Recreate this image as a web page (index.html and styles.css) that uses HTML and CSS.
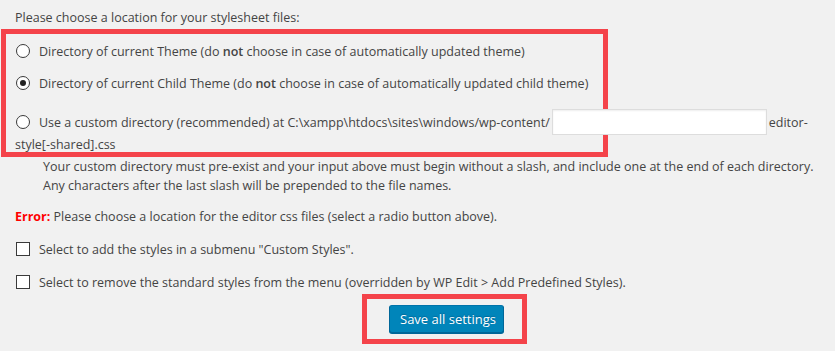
FILE: index.html
```html
<!DOCTYPE html>
<html lang="en">
<head>
<meta charset="utf-8">
<title>Stylesheet location</title>
<link rel="stylesheet" href="styles.css">
</head>
<body>
<div class="page">
  <p class="intro">Please choose a location for your stylesheet files:</p>
  <div class="hl hl-locations">
    <label class="opt"><input type="radio" name="loc">Directory of current Theme (do <b>not</b> choose in case of automatically updated theme)</label>
    <label class="opt opt-second"><input type="radio" name="loc" checked>Directory of current Child Theme (do <b>not</b> choose in case of automatically updated child theme)</label>
    <div class="opt custom"><input type="radio" name="loc">Use a custom directory (recommended) at C:\xampp\htdocs\sites\windows/wp-content/<input type="text" class="field">editor-style[-shared].css</div>
  </div>
  <p class="desc">Your custom directory must pre-exist and your input above must begin without a slash, and include one at the end of each directory.<br>Any characters after the last slash will be prepended to the file names.</p>
  <p class="error"><strong>Error:</strong> Please choose a location for the editor css files (select a radio button above).</p>
  <label class="check check-first"><input type="checkbox">Select to add the styles in a submenu "Custom Styles".</label>
  <label class="check check-second"><input type="checkbox">Select to remove the standard styles from the menu (overridden by WP Edit &gt; Add Predefined Styles).</label>
  <div class="hl hl-submit"><button type="button" class="btn">Save all settings</button></div>
</div>
</body>
</html>
```

FILE: styles.css
```css
html, body {
  margin: 0;
  padding: 0;
  background: #f1f1f1;
}
body {
  font-family: "Open Sans", "Noto Sans", sans-serif;
  font-size: 12.5px;
  color: #444;
  width: 835px;
  height: 351px;
  overflow: hidden;
}
.page {
  display: flex;
  flex-direction: column;
  align-items: flex-start;
}
p { margin: 0; }
.intro {
  margin: 8px 0 0 15px;
  line-height: 20px;
}
.hl {
  border: 5px solid #f4434a;
  box-sizing: border-box;
}
.hl-locations {
  margin: 1px 0 0 1px;
  width: 607px;
  padding: 8px 0 0 9px;
  display: flex;
  flex-direction: column;
  align-items: flex-start;
}
.opt {
  display: block;
  line-height: 20px;
  white-space: nowrap;
}
.opt b { font-weight: 600; }
.opt-second { margin-top: 12px; }
.custom {
  white-space: normal;
  width: 805px;
  margin-top: 18px;
  line-height: 22px;
  margin-bottom: -4px;
}
input[type="radio"],
input[type="checkbox"] {
  -webkit-appearance: none;
  appearance: none;
  box-sizing: border-box;
  width: 14px;
  height: 14px;
  margin: 0 9px 0 1px;
  border: 1px solid #3a3a3a;
  background: #fff;
  vertical-align: -2px;
  position: relative;
}
input[type="radio"] { border-radius: 50%; }
input[type="radio"]:checked::after {
  content: "";
  position: absolute;
  left: 3px;
  top: 3px;
  width: 6px;
  height: 6px;
  border-radius: 50%;
  background: #222;
}
.field {
  box-sizing: border-box;
  width: 215px;
  height: 26px;
  margin: -5px 2px -1px 2px;
  padding: 0 6px;
  border: 1px solid #ddd;
  background: #fff;
  box-shadow: inset 0 1px 2px rgba(0,0,0,.07);
  vertical-align: middle;
  font: inherit;
}
.desc {
  margin: 0 0 0 43px;
  line-height: 19px;
}
.error {
  margin: 12px 0 0 15px;
  line-height: 20px;
}
.error strong {
  color: #f00;
  font-weight: 700;
}
.check {
  display: block;
  margin-left: 15px;
  line-height: 20px;
}
.check-first { margin-top: 13px; }
.check-second { margin-top: 12.5px; }
.check input { margin-left: 1px; }
.hl-submit {
  margin: 1px 0 0 362px;
  width: 165px;
  padding: 6px 18px 6px 22px;
}
.btn {
  font-family: inherit;
  font-size: 13px;
  color: #fff;
  background: #0085ba;
  border: 1px solid #0073aa;
  border-color: #0073aa #006799 #006799;
  box-shadow: 0 1px 0 #006799;
  border-radius: 3px;
  height: 28px;
  width: 115px;
  padding: 0 10px;
  line-height: 26px;
  white-space: nowrap;
  text-shadow: 0 -1px 1px #006799;
}
```
